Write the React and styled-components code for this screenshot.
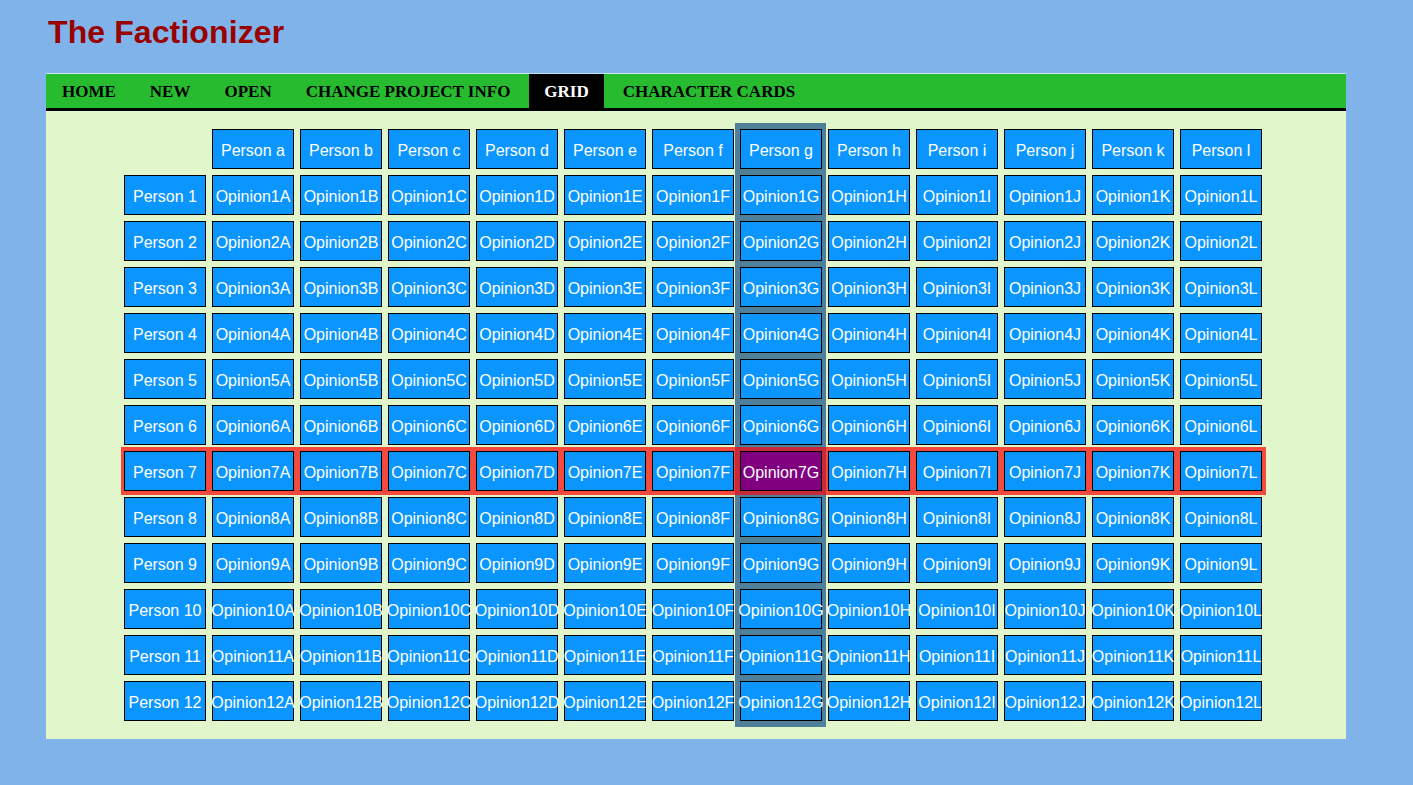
import React from "react";
import styled, { createGlobalStyle } from "styled-components";

const Global = createGlobalStyle`
  html, body { margin: 0; padding: 0; background: #7fb3ea; }
  body { min-height: 100vh; font-family: "Liberation Sans", Arial, sans-serif; }
`;

const Page = styled.div`
  padding: 14px 0 0 46px;
`;

const Title = styled.h1`
  margin: 0 0 22px 2px;
  font-family: "Liberation Sans", Arial, sans-serif;
  font-size: 32px;
  line-height: 37px;
  font-weight: bold;
  letter-spacing: 0.1px;
  color: #990000;
`;

const Frame = styled.div`
  width: 1300px;
`;

const Nav = styled.nav`
  display: flex;
  gap: 4px;
  height: 34px;
  padding-left: 1px;
  background: #27bc2f;
  border-top: 1px solid #c8e6f0;
  border-bottom: 3px solid #000;
`;

const NavItem = styled.a`
  display: block;
  padding: 2px 15px 0;
  line-height: 32px;
  font-family: "Liberation Serif", "Times New Roman", serif;
  font-weight: bold;
  font-size: 17px;
  color: ${(p) => (p.$active ? "#fff" : "#000")};
  background: ${(p) => (p.$active ? "#000" : "transparent")};
  text-decoration: none;
  white-space: nowrap;
  cursor: pointer;
`;

const Content = styled.div`
  background: #e1f6cb;
  padding: 18px 0 18px 78px;
`;

const Stack = styled.div`
  display: grid;
  width: max-content;
  & > * { grid-area: 1 / 1; }
`;

const GridBase = styled.div`
  display: grid;
  grid-template-columns: repeat(13, 82px);
  grid-template-rows: repeat(13, 40px);
  gap: 6px;
`;

const Bands = styled(GridBase)``;
const Cells = styled(GridBase)``;

const ColBand = styled.div`
  grid-column: ${(p) => p.$col};
  grid-row: 1 / -1;
  margin: -6px -4px -6px -5px;
  background: #4f7f99;
`;

const RowBand = styled.div`
  grid-row: ${(p) => p.$row};
  grid-column: 1 / -1;
  margin: -4px -4px -4px -3px;
  background: #f44a3d;
`;

const CrossBand = styled.div`
  grid-row: ${(p) => p.$row};
  grid-column: ${(p) => p.$col};
  margin: -4px -4px -4px -5px;
  background: #c5293a;
`;

const Cell = styled.div`
  box-sizing: border-box;
  display: flex;
  align-items: center;
  justify-content: center;
  padding-top: 3px;
  border: 1px solid #000;
  background: ${(p) => (p.$selected ? "#800080" : "#0a96fe")};
  color: #fff;
  font-family: "Liberation Sans", Arial, sans-serif;
  font-size: 16px;
  white-space: nowrap;
  cursor: pointer;
`;

const Blank = styled.div``;

const letters = "abcdefghijkl".split("");
const navItems = ["HOME", "NEW", "OPEN", "CHANGE PROJECT INFO", "GRID", "CHARACTER CARDS"];

export default function App() {
  const selRow = 7;
  const selCol = 6; // g
  return (
    <>
      <Global />
      <Page>
        <Title>The Factionizer</Title>
        <Frame>
          <Nav>
            {navItems.map((n) => (
              <NavItem key={n} $active={n === "GRID"}>{n}</NavItem>
            ))}
          </Nav>
          <Content>
            <Stack>
              <Bands>
                <ColBand $col={selCol + 2} />
                <RowBand $row={selRow + 1} />
                <CrossBand $row={selRow + 1} $col={selCol + 2} />
              </Bands>
              <Cells>
                <Blank />
                {letters.map((l) => (
                  <Cell key={l}>Person {l}</Cell>
                ))}
                {Array.from({ length: 12 }, (_, i) => (
                  <React.Fragment key={i}>
                    <Cell>Person {i + 1}</Cell>
                    {letters.map((l, j) => (
                      <Cell key={l} $selected={i + 1 === selRow && j === selCol}>
                        Opinion{i + 1}{l.toUpperCase()}
                      </Cell>
                    ))}
                  </React.Fragment>
                ))}
              </Cells>
            </Stack>
          </Content>
        </Frame>
      </Page>
    </>
  );
}
